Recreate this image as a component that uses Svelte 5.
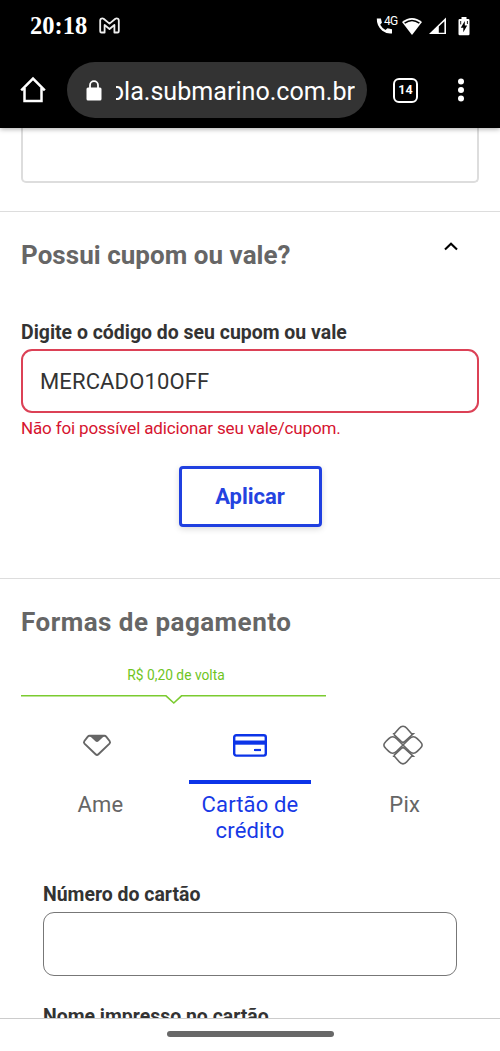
<script lang="ts">
    let coupon = $state("MERCADO10OFF");
    let cardNumber = $state("");
    let couponOpen = $state(true);
    let selected = $state("card");

    const methods = [
        { id: "ame", label: "Ame" },
        { id: "card", label: "Cartão de crédito" },
        { id: "pix", label: "Pix" },
    ];
</script>

<div class="phone">
    <header>
        <div class="status-bar">
            <span class="clock">20:18</span>
            <svg class="gmail" width="22" height="18" viewBox="0 0 22 18">
                <path
                    d="M2 1.8Q3.3 .8 4.6 1.8L10.5 6.6L16.4 1.8Q17.7 .8 19 1.8Q19.8 2.4 19.8 3.6V14.2Q19.8 15.5 18.5 15.5H15.4V8L10.5 12L5.6 8V15.5H2.5Q1.2 15.5 1.2 14.2V3.6Q1.2 2.4 2 1.8Z"
                    fill="none"
                    stroke="#eee"
                    stroke-width="1.8"
                    stroke-linejoin="round"
                />
            </svg>
            <div class="status-icons">
                <div class="call">
                    <svg width="18" height="18" viewBox="0 0 18 18">
                        <path
                            d="M.8 1.5H4.9L5.9 5.8L4.2 7.8Q6 11.2 9.5 13L11.5 11.2L16 12.2V16.4Q11 17.2 6.3 13.7Q.6 9 .8 1.5Z"
                            fill="#fff"
                        />
                    </svg>
                    <span class="network">4G</span>
                </div>
                <svg class="wifi" width="22" height="19" viewBox="0 0 22 19">
                    <path d="M1 5Q11-3 21 5L11 18Z" fill="#fff" />
                    <path d="M3.6 6.2Q11 .7 18.4 6.2" fill="none" stroke="#000" stroke-width="1.6" />
                </svg>
                <svg class="signal" width="19" height="18" viewBox="0 0 19 18">
                    <path d="M1 17L18 .5V17Z" fill="#fff" />
                    <path d="M10.8 15.8V9.4L16.4 4.2V15.8Z" fill="#000" />
                </svg>
                <svg class="battery" width="12" height="19" viewBox="0 0 12 19">
                    <path d="M3.5 0H8.5V2H10.3Q11.5 2 11.5 3.2V17Q11.5 18.2 10.3 18.2H1.7Q.5 18.2 .5 17V3.2Q.5 2 1.7 2H3.5Z" fill="#fff" />
                    <path d="M6.8 4L2.8 10.8H5.3V15.2L9.2 8.6H6.8Z" fill="#000" />
                    <path d="M2.7 4V7.4M9.4 4V7" stroke="#000" stroke-width=".9" />
                </svg>
            </div>
        </div>

        <div class="toolbar">
            <button class="icon-btn" aria-label="Home">
                <svg width="28" height="28" viewBox="0 0 28 28">
                    <path
                        d="M2.2 14.3L14 2.5L25.8 14.3M5.5 12V25H22.5V12"
                        fill="none"
                        stroke="#fff"
                        stroke-width="2.5"
                    />
                </svg>
            </button>
            <div class="omnibox">
                <svg class="lock" width="16" height="21" viewBox="0 0 16 21">
                    <rect x=".5" y="7.5" width="15" height="13" rx="1.5" fill="#fff" />
                    <path d="M4 8V5.2a4 4 0 0 1 8 0V8" fill="none" stroke="#fff" stroke-width="1.8" />
                </svg>
                <div class="url"><span>ola.submarino.com.br</span></div>
            </div>
            <button class="tab-count" aria-label="Tabs">14</button>
            <button class="icon-btn" aria-label="Menu">
                <svg width="8" height="26" viewBox="0 0 8 26">
                    <circle cx="4" cy="4.6" r="3" fill="#fff" />
                    <circle cx="4" cy="13" r="3" fill="#fff" />
                    <circle cx="4" cy="21.4" r="3" fill="#fff" />
                </svg>
            </button>
        </div>
    </header>

    <main>
        <section class="previous">
            <div class="previous-box"></div>
        </section>

        <section class="coupon">
            <div class="coupon-head">
                <h2>Possui cupom ou vale?</h2>
                <button class="toggle" aria-label="Cupom" onclick={() => (couponOpen = !couponOpen)}>
                    <svg width="14" height="9" viewBox="0 0 14 9" class:closed={!couponOpen}>
                        <path d="M1 7.5L7 1.7L13 7.5" fill="none" stroke="#000" stroke-width="2.1" />
                    </svg>
                </button>
            </div>
            {#if couponOpen}
                <label class="field error">
                    <span class="field-label">Digite o código do seu cupom ou vale</span>
                    <input bind:value={coupon} />
                </label>
                <p class="error-text">Não foi possível adicionar seu vale/cupom.</p>
                <button class="apply">Aplicar</button>
            {/if}
        </section>

        <section class="payment">
            <h2 class="payment-title">Formas de pagamento</h2>
            <div class="cashback">
                <span>R$ 0,20 de volta</span>
                <svg width="306" height="11" viewBox="0 0 306 11">
                    <path d="M0 1.8H145L152.8 9L160.5 1.8H305" fill="none" stroke="#7bcb30" stroke-width="1.6" />
                </svg>
            </div>

            <div class="methods">
                {#each methods as method}
                    <button
                        class="method {method.id}"
                        class:active={selected === method.id}
                        onclick={() => (selected = method.id)}
                    >
                        <span class="method-icon">
                            {#if method.id === "ame"}
                                <svg width="30" height="23" viewBox="0 0 30 23">
                                    <path
                                        d="M7.5 1.8H22.5Q23.5 1.8 24.2 2.6L27.6 7Q28.6 8.4 27.5 9.6L16.4 20.3Q15 21.6 13.6 20.3L2.5 9.6Q1.4 8.4 2.4 7L5.8 2.6Q6.5 1.8 7.5 1.8Z"
                                        fill="none"
                                        stroke="#666"
                                        stroke-width="1.9"
                                    />
                                    <path d="M7.5 1.8H22.5L16.6 7.3Q15 8.7 13.4 7.3Z" fill="#666" />
                                </svg>
                            {:else if method.id === "card"}
                                <svg width="34" height="23" viewBox="0 0 34 23">
                                    <rect x="1.2" y="1.2" width="31.6" height="20.4" rx="2" fill="none" stroke="#0c34e8" stroke-width="2.4" />
                                    <path d="M1 8.6H33" stroke="#0c34e8" stroke-width="4.2" />
                                    <path d="M21 16H28" stroke="#0c34e8" stroke-width="2.2" />
                                </svg>
                            {:else}
                                <svg width="40" height="40" viewBox="0 0 40 40" fill="none" stroke="#666" stroke-width="1.6">
                                    <path d="M9.8 8.8H11.4L16.2 3.2C18.5 .5 21.5 .5 23.8 3.2L28.6 8.8H30.2L21.6 16.6Q20 18 18.4 16.6L11 9.6" />
                                    <path d="M9.8 31.2H11.4L16.2 36.8C18.5 39.5 21.5 39.5 23.8 36.8L28.6 31.2H30.2L21.6 23.4Q20 22 18.4 23.4L11 30.4" />
                                    <path d="M20 20L13.6 13.6C11 11.2 8.2 11.2 5.8 13.6L2.6 16.8C.3 19 .3 21 2.6 23.2L5.8 26.4C8.2 28.8 11 28.8 13.6 26.4Z" />
                                    <path d="M20 20L26.4 13.6C29 11.2 31.8 11.2 34.2 13.6L37.4 16.8C39.7 19 39.7 21 37.4 23.2L34.2 26.4C31.8 28.8 29 28.8 26.4 26.4Z" />
                                </svg>
                            {/if}
                        </span>
                        <span class="marker"></span>
                        <span class="method-label">{method.label}</span>
                    </button>
                {/each}
            </div>

            <div class="card-form">
                <label class="field">
                    <span class="field-label">Número do cartão</span>
                    <input bind:value={cardNumber} />
                </label>
                <span class="field-label next-label">Nome impresso no cartão</span>
            </div>
        </section>
    </main>

    <footer><span class="gesture"></span></footer>
</div>

<style>
    :global(body) {
        background: #fff;
    }

    .phone {
        display: flex;
        flex-direction: column;
        width: 500px;
        height: 1051px;
        overflow: hidden;
        background: #fff;
        color: #333;
        font-family: Roboto, sans-serif;
    }

    .phone * {
        box-sizing: border-box;
    }

    button {
        padding: 0;
        border: 0;
        background: none;
        font: inherit;
        color: inherit;
    }

    svg {
        display: block;
        flex: none;
    }

    header {
        flex: none;
        height: 128px;
        background: #000;
        color: #fff;
        box-shadow: 0 1px 5px rgba(0, 0, 0, 0.35);
        z-index: 1;
    }

    .status-bar {
        display: flex;
        align-items: center;
        height: 52px;
        padding: 0 30px;
    }

    .clock {
        width: 69px;
        font: bold 24.5px "Liberation Serif", serif;
    }

    .status-icons {
        display: flex;
        align-items: center;
        margin-left: auto;
    }

    .call {
        display: flex;
        align-items: flex-start;
        width: 25px;
    }

    .network {
        margin: -3px 0 0 -10px;
        font-size: 12px;
        line-height: 14px;
        letter-spacing: -0.8px;
    }

    .signal {
        margin-left: 5px;
    }

    .battery {
        margin-left: 11px;
    }

    .toolbar {
        display: flex;
        align-items: center;
        height: 76px;
        padding: 0 35px 0 19px;
    }

    .omnibox {
        display: flex;
        align-items: center;
        width: 300px;
        height: 56px;
        margin-left: 20px;
        padding: 0 12px 0 19px;
        border-radius: 28px;
        background: #333;
    }

    /* long addresses keep their end visible */
    .url {
        display: flex;
        justify-content: flex-end;
        flex: 1;
        margin-left: 14px;
        padding-top: 2px;
        overflow: hidden;
        font-size: 25.1px;
        white-space: nowrap;
    }

    .tab-count {
        width: 25px;
        height: 25px;
        margin: 0 39px 0 26px;
        border: 2.5px solid #fff;
        border-radius: 6px;
        font-size: 12.5px;
        font-weight: 700;
        line-height: 20px;
    }

    main {
        flex: 1;
        min-height: 0;
        overflow: hidden;
    }

    .previous {
        height: 84px;
        padding: 0 21px;
        border-bottom: 1px solid #ddd;
    }

    .previous-box {
        height: 55px;
        border: 2px solid #ddd;
        border-top: 0;
        border-radius: 0 0 5px 5px;
    }

    .coupon {
        height: 367px;
        padding: 26px 21px 0;
        border-bottom: 1px solid #ddd;
    }

    .coupon-head {
        display: flex;
        justify-content: space-between;
        height: 82px;
        padding-right: 21px;
    }

    h2 {
        margin: 0;
        color: #666;
        font-size: 26px;
        font-weight: 700;
        line-height: 34px;
        letter-spacing: 0.04px;
    }

    .payment-title {
        letter-spacing: 0.48px;
    }

    .toggle {
        align-self: flex-start;
        margin-top: 4px;
    }

    .closed {
        transform: rotate(180deg);
    }

    .field {
        display: block;
    }

    .field-label {
        display: block;
        font-size: 19.45px;
        font-weight: 700;
        line-height: 26px;
        white-space: nowrap;
    }

    input {
        display: block;
        width: 100%;
        height: 64px;
        margin-top: 4px;
        padding: 0 18px;
        border: 1px solid #777;
        border-radius: 11px;
        background: #fff;
        color: #333;
        font: 22px Roboto, sans-serif;
        outline: none;
    }

    .error input {
        margin-top: 3px;
        border: 2px solid #dc4156;
        padding: 0 17px;
        letter-spacing: 0.13px;
    }

    .error-text {
        margin: 4px 0 0;
        color: #d6142f;
        font-size: 17px;
        line-height: 22px;
        letter-spacing: -0.15px;
    }

    .apply {
        display: block;
        width: 143px;
        height: 61px;
        margin: 27px auto 0;
        border: 3px solid #2040e0;
        border-radius: 4px;
        box-shadow: 0 2px 6px rgba(0, 0, 0, 0.15);
        color: #2443e0;
        font-size: 22px;
        font-weight: 700;
    }

    .payment {
        padding: 26px 21px 0;
    }

    .cashback {
        display: flex;
        flex-direction: column;
        align-items: center;
        width: 306px;
        margin-top: 27px;
        color: #6fc51e;
        font-size: 13.8px;
        line-height: 18px;
    }

    .cashback span {
        margin-left: 4px;
    }

    .cashback svg {
        margin-top: 10px;
    }

    .methods {
        display: grid;
        grid-template-columns: repeat(3, 1fr);
        margin-top: 19px;
    }

    .method {
        display: flex;
        flex-direction: column;
        align-items: center;
        color: #666;
        font-size: 22px;
        line-height: 26px;
        letter-spacing: 0.15px;
    }

    .method-icon {
        display: flex;
        align-items: center;
        height: 42px;
    }

    .marker {
        width: 122px;
        height: 4px;
        margin-top: 14px;
    }

    .method-label {
        width: 122px;
        margin-top: 8px;
    }

    .ame .method-label {
        padding-left: 6px;
    }

    .pix .method-label {
        padding-left: 4px;
    }

    .active {
        color: #1739e6;
    }

    .active .marker {
        background: #0c34e8;
    }

    .card-form {
        margin-top: 38px;
        padding: 0 22px;
    }

    .next-label {
        margin-top: 28px;
    }

    footer {
        display: flex;
        flex: none;
        justify-content: center;
        height: 33px;
        padding-top: 12px;
        border-top: 1px solid #ccc;
        background: #fff;
    }

    .gesture {
        width: 167px;
        height: 6px;
        border-radius: 3px;
        background: #686868;
    }
</style>
